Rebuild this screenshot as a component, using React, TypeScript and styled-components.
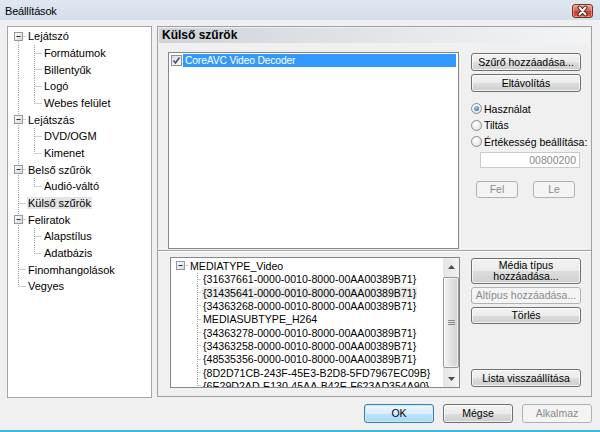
import React from 'react';
import styled, { createGlobalStyle, css } from 'styled-components';

type Row = {
	text: string;
	level: number;
	box?: boolean;
	first?: boolean;
	next?: boolean;
	rails?: boolean[];
	selected?: boolean;
};

const navRows: Row[] = [
	{ text: 'Lejátszó', level: 0, box: true, first: true, next: true },
	{ text: 'Formátumok', level: 1, rails: [true], next: true },
	{ text: 'Billentyűk', level: 1, rails: [true], next: true },
	{ text: 'Logó', level: 1, rails: [true], next: true },
	{ text: 'Webes felület', level: 1, rails: [true] },
	{ text: 'Lejátszás', level: 0, box: true, next: true },
	{ text: 'DVD/OGM', level: 1, rails: [true], next: true },
	{ text: 'Kimenet', level: 1, rails: [true] },
	{ text: 'Belső szűrök', level: 0, box: true, next: true },
	{ text: 'Audió-váltó', level: 1, rails: [true] },
	{ text: 'Külső szűrök', level: 0, next: true, selected: true },
	{ text: 'Feliratok', level: 0, box: true, next: true },
	{ text: 'Alapstílus', level: 1, rails: [true], next: true },
	{ text: 'Adatbázis', level: 1, rails: [true] },
	{ text: 'Finomhangolások', level: 0, next: true },
	{ text: 'Vegyes', level: 0 },
];

const mediaRows: Row[] = [
	{ text: 'MEDIATYPE_Video', level: 0, box: true, first: true },
	{ text: '{31637661-0000-0010-8000-00AA00389B71}', level: 1, next: true },
	{ text: '{31435641-0000-0010-8000-00AA00389B71}', level: 1, next: true, selected: true },
	{ text: '{34363268-0000-0010-8000-00AA00389B71}', level: 1, next: true },
	{ text: 'MEDIASUBTYPE_H264', level: 1, next: true },
	{ text: '{34363278-0000-0010-8000-00AA00389B71}', level: 1, next: true },
	{ text: '{34363258-0000-0010-8000-00AA00389B71}', level: 1, next: true },
	{ text: '{48535356-0000-0010-8000-00AA00389B71}', level: 1, next: true },
	{ text: '{8D2D71CB-243F-45E3-B2D8-5FD7967EC09B}', level: 1, next: true },
	{ text: '{6E29D2AD-E130-45AA-B42E-F623AD354A90}', level: 1, next: true },
];

type TreeMetrics = { h: number; centers: number[]; textX: number[] };

const navMetrics: TreeMetrics = { h: 16.67, centers: [10.5, 26.5], textX: [20, 36] };
const mediaMetrics: TreeMetrics = { h: 13.33, centers: [9.5, 26.5], textX: [19, 32] };

function Guide({ row, m }: { row: Row; m: TreeMetrics }) {
	const w = m.textX[row.level] - 1;
	const mid = Math.floor(m.h / 2) + 0.5;
	const c = m.centers[row.level];
	const lines: React.ReactNode[] = [];
	(row.rails ?? []).forEach((on, k) => {
		if (on) lines.push(<line key={'r' + k} x1={m.centers[k]} y1={0} x2={m.centers[k]} y2={m.h} />);
	});
	const y1 = row.first ? mid : 0;
	const y2 = row.next ? m.h : mid;
	if (y2 > y1) lines.push(<line key="v" x1={c} y1={y1} x2={c} y2={y2} />);
	lines.push(<line key="h" x1={c} y1={mid} x2={w - 1} y2={mid} />);

	return (
		<S.GuideSvg width={w} height={m.h}>
			<g stroke="#a0a0a0" strokeDasharray="1 1" strokeWidth={1}>
				{lines}
			</g>
			{row.box && (
				<g>
					<defs>
						<linearGradient id="boxFill" x1="0" y1="0" x2="1" y2="1">
							<stop offset="0" stopColor="#ffffff" />
							<stop offset="1" stopColor="#d6d6d6" />
						</linearGradient>
					</defs>
					<rect x={c - 4} y={mid - 4} width={8} height={8} fill="url(#boxFill)" stroke="#8f9aa6" />
					<line x1={c - 2} y1={mid} x2={c + 2} y2={mid} stroke="#2b2b2b" />
				</g>
			)}
		</S.GuideSvg>
	);
}

function Tree({ rows, m, small }: { rows: Row[]; m: TreeMetrics; small?: boolean }) {
	return (
		<>
			{rows.map((row, i) => (
				<S.TreeRow key={i} $h={m.h}>
					<Guide row={row} m={m} />
					<S.TreeText $selected={row.selected} $small={small}>
						{row.text}
					</S.TreeText>
				</S.TreeRow>
			))}
		</>
	);
}

function Radio({ label, checked }: { label: string; checked?: boolean }) {
	return (
		<S.RadioRow>
			<S.RadioCircle>{checked && <S.RadioDot />}</S.RadioCircle>
			<span>{label}</span>
		</S.RadioRow>
	);
}

export default function App() {
	return (
		<>
			<GlobalStyle />
			<S.Window>
				<S.TitleBar>
					<span>Beállítások</span>
					<S.CloseButton>
						<svg width="19" height="12" viewBox="0 0 19 12">
							<path d="M6.5 2.5 L12.5 9.5 M12.5 2.5 L6.5 9.5" stroke="#5b1c14" strokeWidth="4" strokeLinecap="round" />
							<path d="M6.5 2.5 L12.5 9.5 M12.5 2.5 L6.5 9.5" stroke="#ffffff" strokeWidth="2" strokeLinecap="round" />
						</svg>
					</S.CloseButton>
				</S.TitleBar>

				<S.Body>
					<S.Panels>
						<S.NavTree>
							<Tree rows={navRows} m={navMetrics} />
						</S.NavTree>

						<S.Group>
							<S.GroupHeader>Külső szűrök</S.GroupHeader>

							<S.UpperSection>
								<S.FilterList>
									<S.FilterItem>
										<S.Checkbox>
											<svg width="9" height="9" viewBox="0 0 9 9">
												<path d="M1.5 4.5 L3.5 7 L7.5 1.5" stroke="#3b4f80" strokeWidth="1.6" fill="none" />
											</svg>
										</S.Checkbox>
										<S.FilterLabel>CoreAVC Video Decoder</S.FilterLabel>
									</S.FilterItem>
								</S.FilterList>

								<S.ButtonColumn>
									<S.Button $h={18}>Szűrő hozzáadása...</S.Button>
									<S.Button $h={18} $mt={3}>
										Eltávolítás
									</S.Button>
									<S.RadioGroup>
										<Radio label="Használat" checked />
										<Radio label="Tiltás" />
										<Radio label="Értékesség beállítása:" />
									</S.RadioGroup>
									<S.MeritInput>00800200</S.MeritInput>
									<S.MoveButtons>
										<S.Button $h={17} $w={42} disabled>
											Fel
										</S.Button>
										<S.Button $h={17} $w={42} disabled>
											Le
										</S.Button>
									</S.MoveButtons>
								</S.ButtonColumn>
							</S.UpperSection>

							<S.Separator />

							<S.LowerSection>
								<S.MediaList>
									<S.MediaTree>
										<Tree rows={mediaRows} m={mediaMetrics} small />
									</S.MediaTree>
									<S.ScrollBar>
										<S.ScrollArrow>
											<svg width="7" height="4" viewBox="0 0 7 4">
												<path d="M0 4 L3.5 0 L7 4 Z" fill="#4d4d4d" />
											</svg>
										</S.ScrollArrow>
										<S.ScrollTrack>
											<S.ScrollThumb>
												<svg width="7" height="6" viewBox="0 0 7 6">
													<path d="M0 0.5 H7 M0 2.5 H7 M0 4.5 H7" stroke="#8a8a8a" />
												</svg>
											</S.ScrollThumb>
										</S.ScrollTrack>
										<S.ScrollArrow>
											<svg width="7" height="4" viewBox="0 0 7 4">
												<path d="M0 0 L3.5 4 L7 0 Z" fill="#4d4d4d" />
											</svg>
										</S.ScrollArrow>
									</S.ScrollBar>
								</S.MediaList>

								<S.LowerColumn>
									<S.Button $h={26}>
										Média típus
										<br />
										hozzáadása...
									</S.Button>
									<S.Button $h={17} $mt={3} disabled>
										Altípus hozzáadása...
									</S.Button>
									<S.Button $h={17} $mt={3}>
										Törlés
									</S.Button>
									<S.ResetButton $h={18}>Lista visszaállítása</S.ResetButton>
								</S.LowerColumn>
							</S.LowerSection>
						</S.Group>
					</S.Panels>

					<S.Footer>
						<S.Button $h={19} $w={70} $primary>
							OK
						</S.Button>
						<S.Button $h={19} $w={70}>
							Mégse
						</S.Button>
						<S.Button $h={19} $w={70} disabled>
							Alkalmaz
						</S.Button>
					</S.Footer>
				</S.Body>
			</S.Window>
		</>
	);
}

const GlobalStyle = createGlobalStyle`
	html, body {
		margin: 0;
		padding: 0;
	}
	body {
		width: 600px;
		height: 432px;
		overflow: hidden;
		font-family: "Liberation Sans", Arial, sans-serif;
		font-size: 11px;
		color: #000;
	}
`;

namespace S {
	export const Window = styled.div`
		width: 600px;
		height: 432px;
		box-sizing: border-box;
		display: flex;
		flex-direction: column;
		background: #f0f0f0;
		border-bottom: 2px solid #3ab7dc;
	`;

	export const TitleBar = styled.div`
		height: 20px;
		flex: none;
		display: flex;
		align-items: center;
		justify-content: space-between;
		padding: 0 7px 0 5px;
		background: linear-gradient(#dfe8f2, #d3dfec);
		font-size: 11px;
		letter-spacing: -0.2px;
		span {
			margin-top: 1px;
		}
	`;

	export const CloseButton = styled.div`
		width: 21px;
		height: 14px;
		box-sizing: border-box;
		margin-top: 1px;
		display: flex;
		align-items: center;
		justify-content: center;
		border: 1px solid #7d2c22;
		border-radius: 3px;
		background: linear-gradient(#e9a596 0%, #d66a5a 45%, #c2402f 55%, #cf5f46 100%);
		box-shadow: inset 0 0 0 1px rgba(255, 220, 210, 0.45);
	`;

	export const Body = styled.div`
		flex: 1;
		display: flex;
		flex-direction: column;
		padding: 6px 8px 0 7px;
		border-left: 1px solid #e3e9ef;
		margin-left: -1px;
	`;

	export const Panels = styled.div`
		display: flex;
		align-items: flex-start;
		gap: 5px;
	`;

	export const NavTree = styled.div`
		width: 145px;
		height: 372px;
		box-sizing: border-box;
		border: 1px solid #a3a6ab;
		background: #fff;
		padding-top: 1px;
		overflow: hidden;
	`;

	export const GuideSvg = styled.svg`
		flex: none;
		display: block;
	`;

	export const TreeRow = styled.div<{ $h: number }>`
		height: ${(p) => p.$h}px;
		display: flex;
		align-items: center;
		white-space: nowrap;
	`;

	export const TreeText = styled.span<{ $selected?: boolean; $small?: boolean }>`
		padding: 0 1px;
		line-height: ${(p) => (p.$small ? 12 : 12)}px;
		font-size: ${(p) => (p.$small ? '10.6px' : '11px')};
		${(p) =>
			p.$selected &&
			css`
				background: ${p.$small ? '#ebebeb' : '#e4e4e4'};
			`}
	`;

	export const Group = styled.div`
		width: 435px;
		height: 371px;
		box-sizing: border-box;
		border: 1px solid #a0a0a0;
		display: flex;
		flex-direction: column;
	`;

	export const GroupHeader = styled.div`
		margin: 1px 1px 0;
		height: 15px;
		padding-left: 3px;
		font-size: 12px;
		font-weight: bold;
		line-height: 15px;
		background: linear-gradient(to right, #cfd3d8, #e6e8eb 60%, #f3f4f5);
	`;

	export const UpperSection = styled.div`
		height: 207px;
		box-sizing: border-box;
		display: flex;
		padding: 9px 0 0 10px;
	`;

	export const FilterList = styled.div`
		width: 291px;
		height: 197px;
		box-sizing: border-box;
		border: 1px solid #828790;
		background: #fff;
		padding: 1px 2px;
	`;

	export const FilterItem = styled.div`
		height: 13px;
		display: flex;
		align-items: center;
	`;

	export const Checkbox = styled.div`
		width: 11px;
		height: 11px;
		box-sizing: border-box;
		flex: none;
		display: flex;
		align-items: center;
		justify-content: center;
		border: 1px solid #8e8f8f;
		background: linear-gradient(135deg, #dcdcdc, #ffffff);
	`;

	export const FilterLabel = styled.div`
		flex: 1;
		height: 13px;
		margin-left: 1px;
		padding-left: 2px;
		font-size: 10.3px;
		line-height: 13px;
		letter-spacing: -0.15px;
		color: #fff;
		background: #3399ff;
	`;

	export const ButtonColumn = styled.div`
		width: 110px;
		margin-left: 12px;
		padding-top: 1px;
		display: flex;
		flex-direction: column;
	`;

	export const Button = styled.button<{ $h?: number; $w?: number; $mt?: number; $primary?: boolean }>`
		box-sizing: border-box;
		flex: none;
		height: ${(p) => p.$h ?? 18}px;
		width: ${(p) => (p.$w ? `${p.$w}px` : '100%')};
		margin: ${(p) => p.$mt ?? 0}px 0 0;
		padding: 0;
		font-family: inherit;
		font-size: 10.5px;
		line-height: 11px;
		color: #000;
		border: 1px solid #707070;
		border-radius: 3px;
		background: linear-gradient(#f3f3f3 0%, #ebebeb 50%, #dddddd 51%, #cfcfcf 100%);
		box-shadow: inset 0 0 0 1px rgba(255, 255, 255, 0.7);
		${(p) =>
			p.$primary &&
			css`
				border-color: #3c7fb1;
				background: linear-gradient(#eaf6fd 0%, #d9f0fc 50%, #bee6fd 51%, #a7d9f5 100%);
				box-shadow: inset 0 0 0 1px #cbe8f8;
			`}
		&:disabled {
			color: #8a8a8a;
			border-color: #adb2b5;
			background: #f4f4f4;
			box-shadow: none;
		}
	`;

	export const ResetButton = styled(Button)`
		margin-top: auto;
		margin-bottom: 1px;
	`;

	export const RadioGroup = styled.div`
		margin-top: 8.5px;
		display: flex;
		flex-direction: column;
	`;

	export const RadioRow = styled.div`
		height: 16.5px;
		display: flex;
		align-items: center;
		gap: 2px;
		font-size: 10.5px;
		white-space: nowrap;
	`;

	export const RadioCircle = styled.div`
		width: 11px;
		height: 11px;
		box-sizing: border-box;
		flex: none;
		border-radius: 50%;
		border: 1px solid #8b8e91;
		background: radial-gradient(circle at 40% 35%, #ffffff, #dadada);
		display: flex;
		align-items: center;
		justify-content: center;
	`;

	export const RadioDot = styled.div`
		width: 5px;
		height: 5px;
		border-radius: 50%;
		background: radial-gradient(circle at 40% 35%, #8fd0ff, #1a5fa8);
	`;

	export const MeritInput = styled.div`
		margin: 2px 0 0 9px;
		width: 100px;
		height: 16px;
		box-sizing: border-box;
		border: 1px solid #c9cbcd;
		background: #fff;
		padding-right: 3px;
		text-align: right;
		font-size: 10.5px;
		line-height: 14px;
		color: #8a8a8a;
	`;

	export const MoveButtons = styled.div`
		margin-top: 12.5px;
		display: flex;
		justify-content: space-between;
		padding: 0 6px 0 5px;
	`;

	export const Separator = styled.div`
		height: 1px;
		background: #a0a0a0;
		border-bottom: 1px solid #fff;
	`;

	export const LowerSection = styled.div`
		flex: 1;
		display: flex;
		padding: 5px 0 0 12px;
	`;

	export const MediaList = styled.div`
		width: 290px;
		height: 131px;
		box-sizing: border-box;
		border: 1px solid #828790;
		background: #fff;
		display: flex;
	`;

	export const MediaTree = styled.div`
		flex: 1;
		padding-top: 1.3px;
		overflow: hidden;
	`;

	export const ScrollBar = styled.div`
		width: 16px;
		flex: none;
		display: flex;
		flex-direction: column;
		background: linear-gradient(to right, #e4e4e4, #f3f3f3);
	`;

	export const ScrollArrow = styled.div`
		height: 17px;
		flex: none;
		display: flex;
		align-items: center;
		justify-content: center;
	`;

	export const ScrollTrack = styled.div`
		flex: 1;
		padding: 2px 0 1px;
		display: flex;
		flex-direction: column;
	`;

	export const ScrollThumb = styled.div`
		height: 91px;
		box-sizing: border-box;
		border: 1px solid #979797;
		border-radius: 2px;
		background: linear-gradient(to right, #f4f4f4, #e2e2e2 50%, #d3d3d3);
		box-shadow: inset 0 0 0 1px rgba(255, 255, 255, 0.6);
		display: flex;
		align-items: center;
		justify-content: center;
	`;

	export const LowerColumn = styled.div`
		width: 110px;
		height: 131px;
		margin-left: 11px;
		padding-top: 1px;
		box-sizing: border-box;
		display: flex;
		flex-direction: column;
	`;

	export const Footer = styled.div`
		margin-top: 6px;
		display: flex;
		justify-content: flex-end;
		gap: 9px;
	`;
}
